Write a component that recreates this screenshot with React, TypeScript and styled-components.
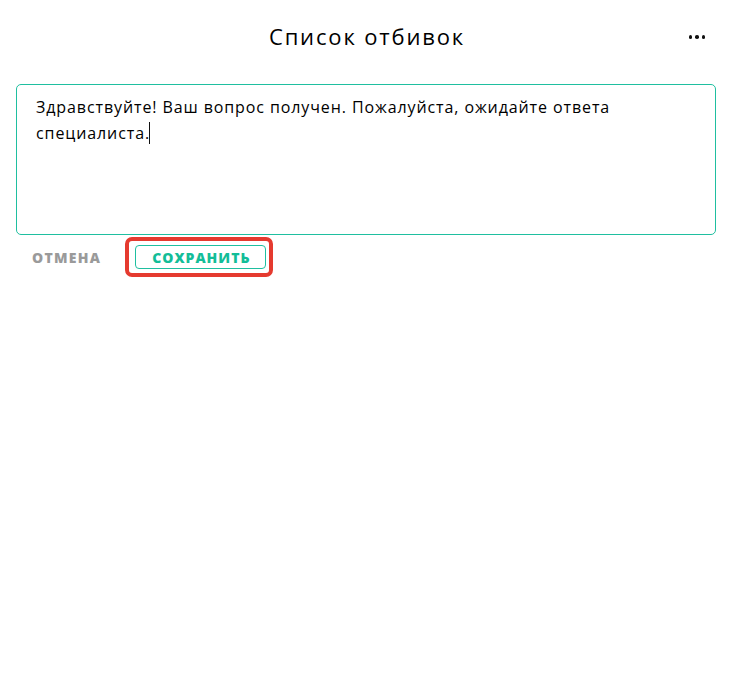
import React from "react";
import styled, { createGlobalStyle } from "styled-components";

const Global = createGlobalStyle`
  html, body { margin: 0; padding: 0; background: #fff; }
  body { font-family: "Open Sans", "Noto Sans", sans-serif; color: #111; }
  * { box-sizing: border-box; }
`;

const Page = styled.div`
  width: 733px;
  min-height: 694px;
  padding: 16px 17px 0 16px;
  display: flex;
  flex-direction: column;
`;

const Header = styled.header`
  height: 42px;
  display: grid;
  grid-template-columns: 1fr auto 1fr;
  align-items: center;
`;

const Title = styled.h1`
  grid-column: 2;
  margin: 0;
  font-size: 22px;
  font-weight: 400;
  color: #000;
  letter-spacing: 1.85px;
  transform: translate(1px, -1px);
`;

const MoreButton = styled.button`
  grid-column: 3;
  justify-self: end;
  margin-right: 7px;
  width: 24px;
  height: 24px;
  border: none;
  background: transparent;
  display: flex;
  align-items: center;
  justify-content: center;
  gap: 3px;
  padding: 0;
`;

const Dot = styled.span`
  width: 3.5px;
  height: 3.5px;
  border-radius: 50%;
  background: #111;
`;

const Editor = styled.div`
  margin-top: 26px;
  height: 151px;
  border: 1px solid #1fbfa0;
  border-radius: 5px;
  padding: 9px 19px;
  font-size: 16px;
  line-height: 26px;
  letter-spacing: 0.9px;
  color: #000;
`;

const Caret = styled.span`
  display: inline-block;
  width: 1px;
  height: 22px;
  background: #111;
  vertical-align: -5px;
  margin-left: -1px;
`;

const Actions = styled.div`
  display: flex;
  align-items: center;
  margin-top: 2px;
  gap: 24px;
  padding-left: 16px;
`;

const TextButton = styled.button`
  border: none;
  background: transparent;
  padding: 0;
  font-family: inherit;
  font-size: 14px;
  font-weight: 800;
  letter-spacing: 1.3px;
  color: #9a9a9a;
  text-transform: uppercase;
`;

const Highlight = styled.span`
  display: inline-flex;
  padding: 4px 3px 4px 6px;
  border: 4px solid #e53a2f;
  border-radius: 7px;
`;

const OutlineButton = styled.button`
  width: 131px;
  height: 24px;
  border: 1px solid #1fbfa0;
  border-radius: 4px;
  background: #fff;
  padding: 0 0 0 1px;
  font-family: inherit;
  font-size: 14px;
  font-weight: 800;
  letter-spacing: 1px;
  color: #13bd98;
  text-transform: uppercase;
`;

export default function App() {
  return (
    <>
      <Global />
      <Page>
        <Header>
          <Title>Список отбивок</Title>
          <MoreButton aria-label="Ещё">
            <Dot />
            <Dot />
            <Dot />
          </MoreButton>
        </Header>
        <Editor>
          Здравствуйте! Ваш вопрос получен. Пожалуйста, ожидайте ответа
          специалиста.<Caret />
        </Editor>
        <Actions>
          <TextButton>Отмена</TextButton>
          <Highlight>
            <OutlineButton>Сохранить</OutlineButton>
          </Highlight>
        </Actions>
      </Page>
    </>
  );
}
